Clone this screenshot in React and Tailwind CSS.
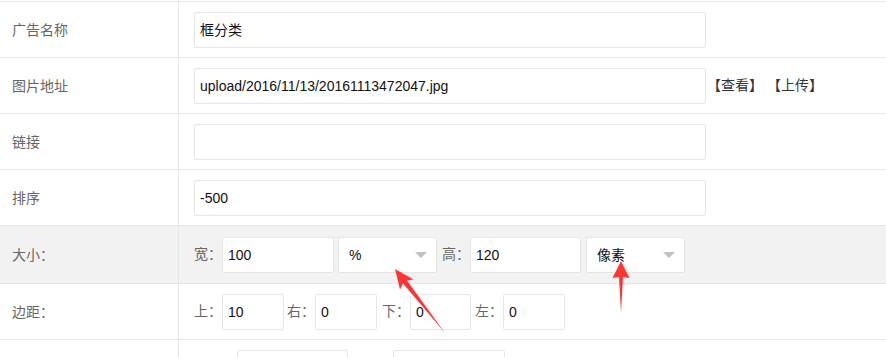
import React from "react";

const font = { fontFamily: '"Liberation Sans", "Noto Sans CJK SC", sans-serif' };

function Input({ value, w }) {
  return (
    <div
      className={`h-9 ${w} shrink-0 border border-[#e6e6e6] rounded-[2px] bg-white pl-[5px] flex items-center text-[14px] text-[#111] leading-none`}
    >
      {value}
    </div>
  );
}

function Select({ value, className = "" }) {
  return (
    <div
      className={`h-9 w-[99px] shrink-0 border border-[#e6e6e6] rounded-[2px] bg-white pl-[10px] pr-[9px] flex items-center justify-between text-[14px] text-[#111] leading-none ${className}`}
    >
      <span>{value}</span>
      <span className="w-0 h-0 border-l-[6px] border-r-[6px] border-t-[6px] border-l-transparent border-r-transparent border-t-[#c2c2c2]" />
    </div>
  );
}

function Row({ label, children, gray = false, h = "h-[56px]" }) {
  return (
    <div className={`flex ${h} border-b border-[#e6e6e6] ${gray ? "bg-[#f2f2f2]" : "bg-white"}`}>
      <div className="w-[179px] shrink-0 border-r border-[#e6e6e6] pl-[12px] pt-[2px] flex items-center text-[14px] text-[#666]">
        {label}
      </div>
      <div className="flex-1 pl-[15px] flex items-center text-[14px] text-[#666]">{children}</div>
    </div>
  );
}

function Lbl({ children, className = "" }) {
  return <span className={`shrink-0 w-[28px] ${className}`}>{children}</span>;
}

export default function App() {
  return (
    <div className="relative w-[886px] h-[357px] overflow-hidden bg-white" style={font}>
      <div className="flex h-[2px] border-b border-[#e6e6e6]">
        <div className="w-[179px] border-r border-[#e6e6e6]" />
      </div>
      <Row label="广告名称">
        <Input value="框分类" w="w-[512px]" />
      </Row>
      <Row label="图片地址">
        <Input value="upload/2016/11/13/20161113472047.jpg" w="w-[512px]" />
        <span className="text-[#333] ml-[1px] whitespace-nowrap">【查看】 【上传】</span>
      </Row>
      <Row label="链接">
        <Input value="" w="w-[512px]" />
      </Row>
      <Row label="排序">
        <Input value="-500" w="w-[512px]" />
      </Row>
      <Row label="大小：" gray h="h-[58px]">
        <Lbl>宽：</Lbl>
        <Input value="100" w="w-[112px]" />
        <Select value="%" className="ml-[4px]" />
        <Lbl className="ml-[5px]">高：</Lbl>
        <Input value="120" w="w-[111px]" />
        <Select value="像素" className="ml-[5px]" />
      </Row>
      <Row label="边距：">
        <Lbl>上：</Lbl>
        <Input value="10" w="w-[62px]" />
        <Lbl className="ml-[3px]">右：</Lbl>
        <Input value="0" w="w-[62px]" />
        <Lbl className="ml-[5px]">下：</Lbl>
        <Input value="0" w="w-[61px]" />
        <Lbl className="ml-[4px]">左：</Lbl>
        <Input value="0" w="w-[62px]" />
      </Row>
      <Row label="">
        <span className="w-[43px] shrink-0" />
        <Input value="" w="w-[111px]" />
        <span className="w-[45px] shrink-0" />
        <Input value="" w="w-[112px]" />
      </Row>

      <svg className="absolute left-0 top-0 pointer-events-none" width="886" height="357">
        <polygon
          points="395,269 413.5,279.5 407,280.5 445,333 403,283.5 400,289.5"
          fill="#ff3535"
        />
        <polygon
          points="621,261 629.5,278 623,277 621,313 619,277 612.5,278"
          fill="#ff3535"
        />
      </svg>
    </div>
  );
}
